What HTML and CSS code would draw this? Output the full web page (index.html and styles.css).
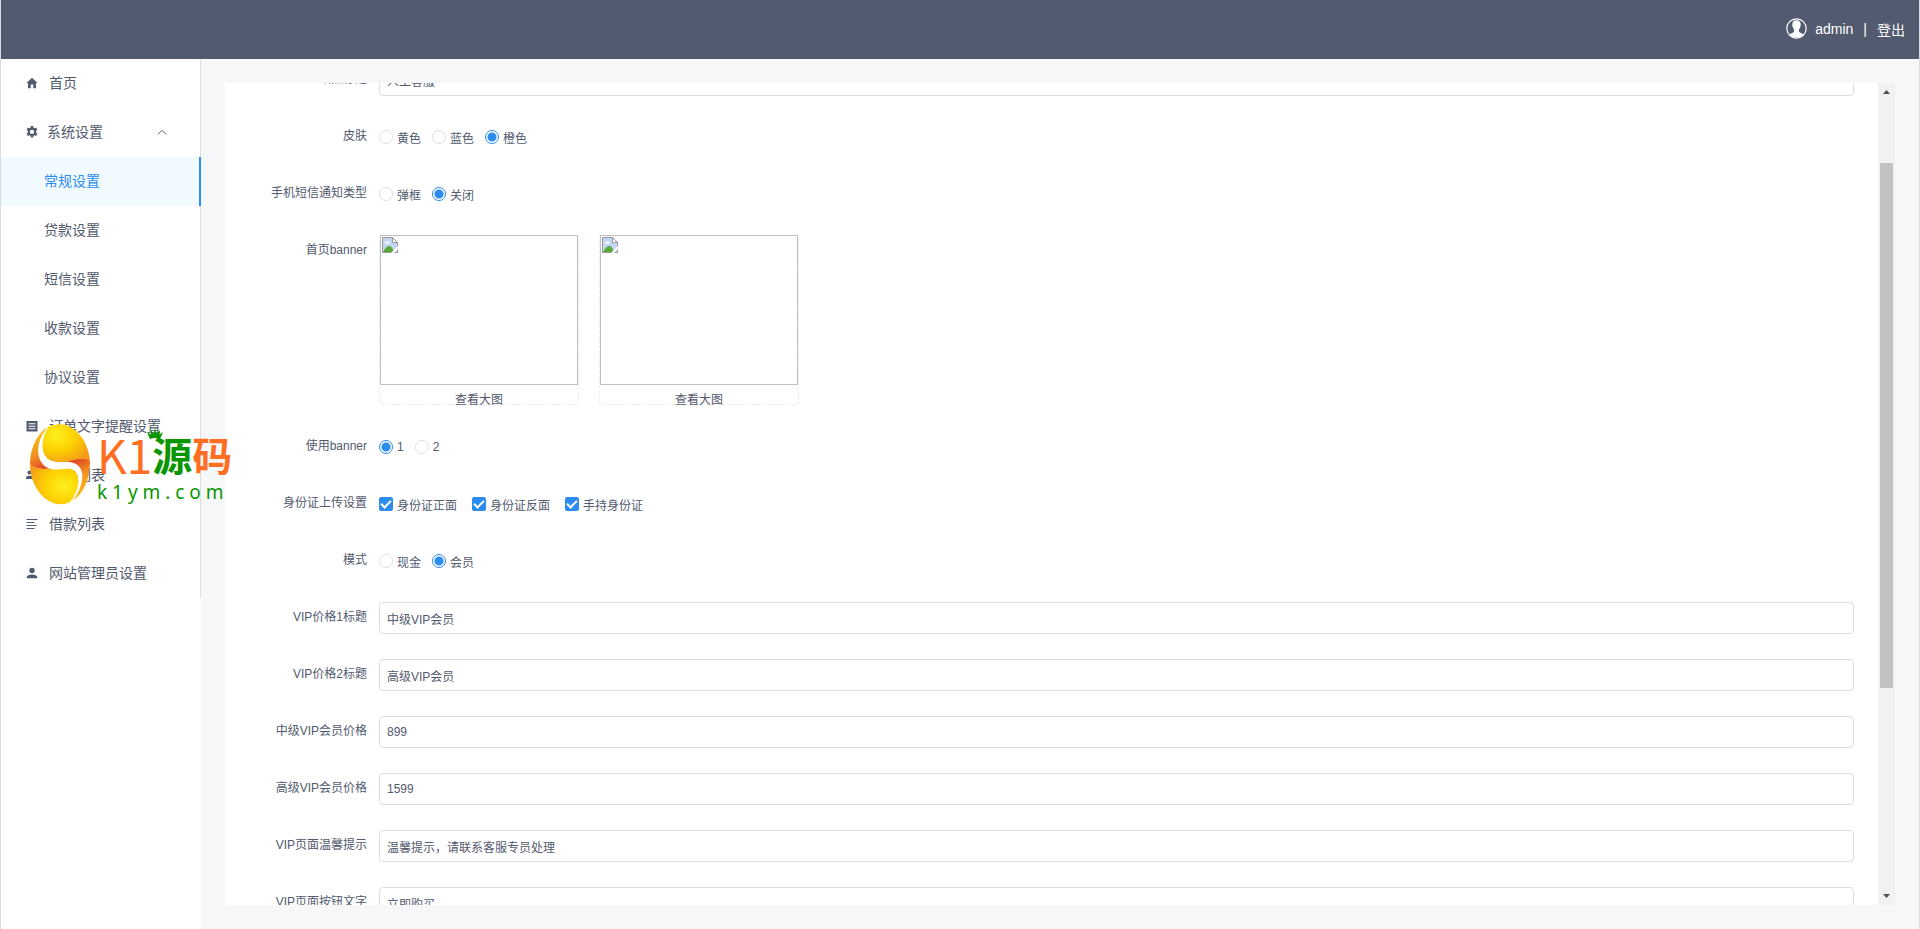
FILE: index.html
```
<!DOCTYPE html>
<html lang="zh-CN">
  <head>
    <meta charset="UTF-8" />
    <meta name="viewport" content="width=device-width, initial-scale=1.0" />
    <title>常规设置</title>
    <link rel="stylesheet" href="styles.css">
  </head>
  <body>
    <div class="layout">
      <header class="header">
        <svg class="avatar" viewBox="0 0 21 21">
          <circle cx="10.5" cy="10.5" r="9.7" fill="none" stroke="#fff" stroke-width="1.2"/>
          <path d="M10.5 2.3c3 0 4.300 1.900 4.200 4.500-.1 2.200-.9 3.600-1.700 4.600v2c.6 1.500 3.200 1.700 4.700 2.900A9.500 9.500 0 0 1 3.300 16.300c1.500-1.200 4.100-1.400 4.700-2.900v-2c-.8-1-1.600-2.400-1.700-4.600-.1-2.600 1.200-4.500 4.200-4.500z" fill="#fff"/>
        </svg>
        <span>admin</span>
        <span class="divider">|</span>
        <a href="#">登出</a>
      </header>

      <div class="body">
        <aside class="sider">
          <nav class="menu">
            <a class="item" href="#">
              <svg class="icon" viewBox="0 0 12 12"><path d="M6 .8 11.500 6H10v5.300H7.300V7.500H4.700v3.800H2V6H.5z"/></svg>
              首页
            </a>
            <button class="item submenu" type="button">
              <svg class="icon" viewBox="0 0 12 12"><path fill-rule="evenodd" d="M4.800.1h2.400l.3 1.600 1 .5 1.600-.6 1.300 2.200-1.200 1v1.900l1.200 1-1.300 2.200-1.600-.6-1 .5-.3 1.700H4.800l-.3-1.700-1-.5-1.600.6L.6 7.700l1.200-1V4.800l-1.200-1L1.900 1.600l1.600.6 1-.5zM6 3.800a2.100 2.100 0 1 0 0 4.200 2.100 2.100 0 0 0 0-4.200z"/></svg>
              系统设置
              <svg class="arrow" viewBox="0 0 10 10"><path d="M1 7.300 5 3.300 9 7.300"/></svg>
            </button>
            <a class="item sub active" href="#">常规设置</a>
            <a class="item sub" href="#">贷款设置</a>
            <a class="item sub" href="#">短信设置</a>
            <a class="item sub" href="#">收款设置</a>
            <a class="item sub" href="#">协议设置</a>
            <a class="item" href="#">
              <svg class="icon" viewBox="0 0 12 12"><path fill-rule="evenodd" d="M.5 1h11v10.500H.5zM2.500 3.300v.9h7v-.9zM2.500 5.800v.9h7v-.9zM2.500 8.300v.9h7v-.9z"/></svg>
              订单文字提醒设置
            </a>
            <a class="item" href="#">
              <svg class="icon" viewBox="0 0 12 12"><circle cx="3.500" cy="3.500" r="2"/><circle cx="8.500" cy="3.500" r="2"/><path d="M0 10V8.500C0 6 7 6 7 8.500V10zM7.500 10V6.500C9 6 12 6.500 12 8.500V10z"/></svg>
              用户列表
            </a>
            <a class="item" href="#">
              <svg class="icon" viewBox="0 0 12 12"><path d="M.5 1h11v1.100H.5zM.5 4h8v1.100h-8zM.5 7h10v1.100H.5zM.5 10h8v1.100h-8z"/></svg>
              借款列表
            </a>
            <a class="item" href="#">
              <svg class="icon" viewBox="0 0 12 12"><circle cx="6" cy="3.400" r="2.700"/><path d="M.8 11.300V10C.8 6.600 11.200 6.600 11.200 10v1.300z"/></svg>
              网站管理员设置
            </a>
          </nav>
        </aside>

        <main class="content">
          <div class="panel">
            <form class="form">
              <div class="row">
                <label class="label" for="siteTitle">站点标题</label>
                <input class="input" type="text" id="siteTitle" value="人工客服">
              </div>
              <div class="row">
                <span class="label">皮肤</span>
                <div class="options">
                  <label><input type="radio" name="skin">黄色</label>
                  <label><input type="radio" name="skin">蓝色</label>
                  <label><input type="radio" name="skin" checked>橙色</label>
                </div>
              </div>
              <div class="row">
                <span class="label">手机短信通知类型</span>
                <div class="options">
                  <label><input type="radio" name="sms">弹框</label>
                  <label><input type="radio" name="sms" checked>关闭</label>
                </div>
              </div>
              <div class="row">
                <span class="label">首页banner</span>
                <div class="banners">
                  <div class="banner">
                    <div class="picture">
                      <svg class="broken" viewBox="0 0 16 16"><path d="M.5.500h10L15.500 5.500v10H.5z" fill="#c3d5f5" stroke="#999"/><path d="M10.500.500v5h5z" fill="#fff" stroke="#999"/><path d="M2.500 6.500c0-2 2-2 2.300-1.300C5.500 3.500 8 4 8 6.500z" fill="#fff"/><path d="M1 15c2-4 4-6 6-6 2.500 0 4 2.500 4.500 6z" fill="#57ab34"/><path d="M9 16 16 9v3l-4 4z" fill="#fff"/></svg>
                    </div>
                    <a href="#">查看大图</a>
                  </div>
                  <div class="banner">
                    <div class="picture">
                      <svg class="broken" viewBox="0 0 16 16"><path d="M.5.500h10L15.500 5.500v10H.5z" fill="#c3d5f5" stroke="#999"/><path d="M10.500.500v5h5z" fill="#fff" stroke="#999"/><path d="M2.500 6.500c0-2 2-2 2.300-1.300C5.500 3.500 8 4 8 6.500z" fill="#fff"/><path d="M1 15c2-4 4-6 6-6 2.500 0 4 2.500 4.500 6z" fill="#57ab34"/><path d="M9 16 16 9v3l-4 4z" fill="#fff"/></svg>
                    </div>
                    <a href="#">查看大图</a>
                  </div>
                </div>
              </div>
              <div class="row">
                <span class="label">使用banner</span>
                <div class="options">
                  <label><input type="radio" name="banner" checked>1</label>
                  <label><input type="radio" name="banner">2</label>
                </div>
              </div>
              <div class="row">
                <span class="label">身份证上传设置</span>
                <div class="options checks">
                  <label><input type="checkbox" checked>身份证正面</label>
                  <label><input type="checkbox" checked>身份证反面</label>
                  <label><input type="checkbox" checked>手持身份证</label>
                </div>
              </div>
              <div class="row">
                <span class="label">模式</span>
                <div class="options">
                  <label><input type="radio" name="mode">现金</label>
                  <label><input type="radio" name="mode" checked>会员</label>
                </div>
              </div>
              <div class="row">
                <label class="label" for="vipTitle1">VIP价格1标题</label>
                <input class="input" type="text" id="vipTitle1" value="中级VIP会员">
              </div>
              <div class="row">
                <label class="label" for="vipTitle2">VIP价格2标题</label>
                <input class="input" type="text" id="vipTitle2" value="高级VIP会员">
              </div>
              <div class="row">
                <label class="label" for="vipPrice1">中级VIP会员价格</label>
                <input class="input" type="text" id="vipPrice1" value="899">
              </div>
              <div class="row">
                <label class="label" for="vipPrice2">高级VIP会员价格</label>
                <input class="input" type="text" id="vipPrice2" value="1599">
              </div>
              <div class="row">
                <label class="label" for="vipTip">VIP页面温馨提示</label>
                <input class="input" type="text" id="vipTip" value="温馨提示，请联系客服专员处理">
              </div>
              <div class="row">
                <label class="label" for="vipButton">VIP页面按钮文字</label>
                <input class="input" type="text" id="vipButton" value="立即购买">
              </div>
            </form>
            <div class="scrollbar">
              <svg class="scroll-arrow" viewBox="0 0 17 17"><path d="M5 11h7L8.500 7z"/></svg>
              <div class="track"><div class="thumb"></div></div>
              <svg class="scroll-arrow" viewBox="0 0 17 17"><path d="M5 6h7l-3.500 4z"/></svg>
            </div>
          </div>
        </main>
      </div>
    </div>

    <div class="watermark">
      <svg class="mark" viewBox="0 0 60 81">
        <defs>
          <radialGradient id="goldTop" cx=".3" cy=".3" r=".8">
            <stop offset="0" stop-color="#fff01e"/>
            <stop offset=".5" stop-color="#fdd000"/>
            <stop offset="1" stop-color="#f39a1c"/>
          </radialGradient>
          <radialGradient id="goldBottom" cx=".7" cy=".55" r=".8">
            <stop offset="0" stop-color="#fff01e"/>
            <stop offset=".5" stop-color="#fdd000"/>
            <stop offset="1" stop-color="#f39a1c"/>
          </radialGradient>
          <linearGradient id="flameLeft" x1=".3" y1="0" x2=".6" y2="1">
            <stop offset="0" stop-color="#fbc810"/>
            <stop offset=".6" stop-color="#f29220"/>
            <stop offset="1" stop-color="#e0402a"/>
          </linearGradient>
          <linearGradient id="flameRight" x1=".4" y1="0" x2=".7" y2="1">
            <stop offset="0" stop-color="#e0402a"/>
            <stop offset=".4" stop-color="#f29220"/>
            <stop offset="1" stop-color="#fbc810"/>
          </linearGradient>
        </defs>
        <path d="M17 3C5 12 0 27 0 40c4 5 14 6 24 4C8 40 6 20 17 3z" fill="url(#flameLeft)"/>
        <path d="M18 3C24 0 33-1 40 3c12 6 19 20 20 34-6-3-14-1-22 1-6 1-12 0-17-1C10 32 10 16 18 3z" fill="url(#goldTop)"/>
        <path d="M60 37C54 33 42 36 34 39c18 1 22 18 8 38C55 69 60 53 60 37z" fill="url(#flameRight)"/>
        <path d="M0 40c6 6 16 5 25 4 9-2 16-1 20 3 6 7 4 20-5 31-6 3-13 3-19 0C8 72 0 56 0 40z" fill="url(#goldBottom)"/>
        <path d="M18 3C9 19 11 33 22 37c8 3 16-1 24 3 10 6 8 22-4 38 8-16 9-27 3-31-6-5-16 0-24-2C5 41 4 18 18 3z" fill="#fff"/>
      </svg>
      <div class="brand">
        <div class="brand-name"><span>K1</span><b class="green">源</b><b>码</b></div>
        <div class="brand-site">k 1 y m . c o m</div>
        <svg class="crown" viewBox="0 0 16 12"><path d="M3 11 0 4l4 2.500L3.500 2 7 5.500 8 0l1.500 5.500L13 2l-.5 4.500L16 4l-3 7q-5-2-10 0z"/></svg>
      </div>
    </div>
  </body>
</html>
```
FILE: styles.css
```
* {
  box-sizing: border-box;
}
body {
  margin: 0;
  font-family: "Liberation Sans", "Noto Sans CJK SC", sans-serif;
  font-size: 12px;
  color: #515a6e;
}
a {
  color: inherit;
  text-decoration: none;
}
.layout {
  display: flex;
  flex-direction: column;
  height: 100vh;
  border: 1px solid #d7dde4;
  border-width: 0 1px;
  background: #f5f7f9;
  overflow: hidden;
}
.header {
  display: flex;
  flex: none;
  align-items: center;
  justify-content: flex-end;
  gap: 8px;
  height: 59px;
  padding: 0 14px 2px;
  background: #515a6e;
  color: #fff;
  font-size: 14px;
}
.avatar {
  width: 21px;
  height: 21px;
}
.divider {
  padding: 0 2px;
}
.body {
  display: flex;
  flex: 1;
  min-height: 0;
}

/* side menu */
.sider {
  flex: none;
  width: 200px;
  background: #fff;
}
.menu {
  border-right: 1px solid #dcdee2;
}
.item {
  display: flex;
  align-items: center;
  gap: 11px;
  width: 100%;
  height: 49px;
  padding: 0 24px 4px 25px;
  border: none;
  background: none;
  color: #515a6e;
  font-family: inherit;
  font-size: 14px;
  cursor: pointer;
}
.submenu {
  gap: 9px;
}
.sub {
  padding-left: 43px;
}
.active {
  width: 200px;
  border-right: 2px solid #2d8cf0;
  background: #f0faff;
  color: #2d8cf0;
}
.icon {
  width: 12px;
  height: 12px;
  margin-top: 3px;
  fill: #515a6e;
}
.arrow {
  width: 10px;
  height: 10px;
  margin-top: 3px;
  margin-left: auto;
  margin-right: 9px;
  fill: none;
  stroke: #515a6e;
}

/* settings form */
.content {
  flex: 1;
  min-width: 0;
  padding: 24px;
}
.panel {
  display: flex;
  height: 100%;
  background: #fff;
  overflow: hidden;
}
.form {
  flex: 1;
  margin-top: -19px;
  padding: 0 24px;
}
.row {
  display: flex;
  align-items: flex-start;
  margin-bottom: 24px;
}
.label {
  flex: none;
  width: 130px;
  padding-right: 12px;
  line-height: 31px;
  text-align: right;
}
.input {
  flex: 1;
  height: 32px;
  margin-bottom: 1px;
  padding: 0 7px;
  border: 1px solid #dcdee2;
  border-radius: 4px;
  color: #515a6e;
  font-family: inherit;
  font-size: 12px;
}
.options {
  display: flex;
  align-items: center;
  gap: 11px;
  height: 33px;
  padding-bottom: 1px;
}
.checks {
  gap: 15px;
}
.options label {
  display: flex;
  align-items: center;
  gap: 4px;
}
.options input {
  appearance: none;
  width: 14px;
  height: 14px;
  margin: 0;
  border: 1px solid #dcdee2;
  border-radius: 50%;
  background: #fff;
}
.options input:checked {
  border-color: #2d8cf0;
}
.options input[type="radio"]:checked {
  background: radial-gradient(#2d8cf0 4px, #fff 5px);
}
.options input[type="checkbox"] {
  display: grid;
  place-items: center;
  border-radius: 2px;
  background: #2d8cf0;
}
.options input[type="checkbox"]::after {
  content: "";
  width: 4px;
  height: 8px;
  margin-bottom: 2px;
  border: 2px solid #fff;
  border-width: 0 2px 2px 0;
  transform: rotate(45deg);
}
.banners {
  display: flex;
  gap: 20px;
  padding-bottom: 2px;
}
.banner {
  width: 200px;
  height: 170px;
  border: 1px dashed #e8eaec;
  border-top: none;
  border-radius: 4px;
  text-align: center;
  line-height: 31px;
}
.picture {
  height: 150px;
  padding: 1px;
  border: 1px solid #c0c0c0;
}
.broken {
  display: block;
  width: 16px;
  height: 16px;
}

/* scrollbar */
.scrollbar {
  display: flex;
  flex-direction: column;
  flex: none;
  width: 17px;
  background: #f1f1f1;
}
.scroll-arrow {
  width: 17px;
  height: 17px;
  fill: #505050;
}
.track {
  flex: 1;
  padding: 63px 2px 0;
}
.thumb {
  height: 72.4%;
  background: #c1c1c1;
}

/* logo lying over the page */
.watermark {
  position: absolute;
  top: 424px;
  left: 30px;
  display: flex;
  gap: 7px;
  pointer-events: none;
}
.mark {
  width: 60px;
  height: 81px;
}
.brand {
  position: relative;
}
.brand-name {
  display: flex;
  height: 56px;
  color: #ff6e21;
  font-family: "Noto Sans CJK SC", sans-serif;
  font-size: 40px;
  line-height: 60px;
}
.brand-name span {
  font-size: 46px;
}
.green {
  color: #0a9600;
}
.crown {
  position: absolute;
  top: 4px;
  left: 50px;
  width: 16px;
  height: 12px;
  fill: #0a9600;
}
.brand-site {
  color: #0a9600;
  font-family: "Noto Sans", sans-serif;
  font-size: 19px;
  line-height: 24px;
}
```
